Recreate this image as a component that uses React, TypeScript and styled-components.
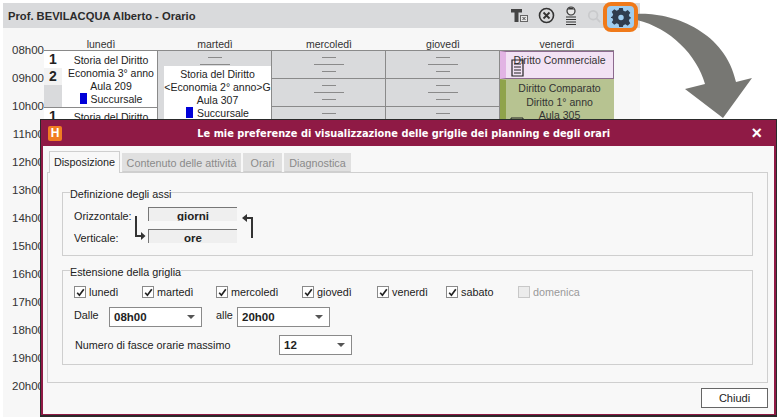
import React from "react";
import styled, { createGlobalStyle } from "styled-components";

const Global = createGlobalStyle`
  html, body { margin: 0; padding: 0; background: #fff; }
  body { font-family: "Liberation Sans", Arial, sans-serif; font-size: 11px; color: #222; }
`;

const Page = styled.div`
  position: relative;
  width: 780px;
  height: 417px;
  overflow: hidden;
  background: #fff;
  padding: 3px 0 0 3px;
  box-sizing: border-box;
`;

const Panel = styled.section`
  width: 637px;
  height: 414px;
  background: #f7f7f7;
  overflow: hidden;
`;

const TitleBar = styled.header`
  height: 25px;
  background: #d9dadc;
  display: flex;
  align-items: center;
  padding: 0 5px;
  font: bold 11.2px "Liberation Sans", sans-serif;
  color: #2b2b2b;
`;

const TitleText = styled.div`
  flex: 1;
`;

const Tools = styled.div`
  display: flex;
  align-items: center;
  gap: 10px;
  margin-right: 34px;
`;

const GridArea = styled.div`
  display: grid;
  grid-template-columns: 41px repeat(5, 114px);
  padding-top: 6px;
`;

const Hours = styled.div`
  display: flex;
  flex-direction: column;
  padding-top: 8px;
  align-items: flex-end;
`;

const Hour = styled.div`
  height: 28px;
  line-height: 16px;
  color: #333;
  font-size: 11.5px;
`;

const Day = styled.div`
  display: flex;
  flex-direction: column;
  min-width: 0;
`;

const DayName = styled.div`
  height: 17px;
  padding-top: 3px;
  line-height: 14px;
  text-align: center;
  border-bottom: 1px solid #8a8a8a;
  box-sizing: border-box;
  font-size: 10.5px;
  color: #333;
`;

const Course = styled.div<{ $h: number }>`
  height: ${(p) => p.$h}px;
  flex: none;
  display: flex;
  border-right: 1px solid #8a8a8a;
  border-bottom: 1px solid #8a8a8a;
  box-sizing: border-box;
  background: #fff;
`;

const Strip = styled.div`
  width: 18px;
  background: #d9dadc;
  flex: none;
  display: flex;
  flex-direction: column;
`;

const Num = styled.div<{ $alt?: boolean }>`
  height: 17px;
  background: ${(p) => (p.$alt ? "#f2f2f2" : "#fff")};
  font: bold 14px/17px "Liberation Sans", sans-serif;
  color: #222;
  text-align: center;
`;

const CourseText = styled.div`
  flex: 1;
  min-width: 0;
  box-sizing: border-box;
  text-align: center;
  line-height: 13px;
  font-size: 10.5px;
  padding: 3px 0 0 3px;
  white-space: nowrap;
  overflow: hidden;
`;

const Blue = styled.span`
  display: inline-block;
  width: 7px;
  height: 11px;
  background: #0000d8;
  margin-right: 4px;
  vertical-align: -1px;
`;

const Empty = styled.div<{ $h: number }>`
  height: ${(p) => p.$h}px;
  background: #d9dadc;
  border-right: 1px solid #8a8a8a;
  border-bottom: 1px solid #8a8a8a;
  box-sizing: border-box;
  display: flex;
  flex-direction: column;
  align-items: center;
  padding-top: 6px;
  gap: 6px;
  flex: none;
  overflow: hidden;
`;

const TopEmpty = styled(Empty)`
  border-bottom: none;
`;

const Dash = styled.div<{ $w: number }>`
  width: ${(p) => p.$w}px;
  height: 1px;
  background: #8a8a8a;
  flex: none;
`;

const MartediSlot = styled.div`
  display: flex;
  height: 68px;
  flex: none;
  background: #d9dadc;
  border-right: 1px solid #8a8a8a;
  box-sizing: border-box;
`;

const MartediBody = styled.div`
  flex: 1;
  min-width: 0;
  margin-left: 6px;
  background: #fff;
  text-align: center;
  line-height: 13px;
  font-size: 10.5px;
  padding-top: 2px;
  white-space: nowrap;
`;

const Tinted = styled.div<{ $bg: string; $strip: string; $border: string; $h: number }>`
  position: relative;
  height: ${(p) => p.$h}px;
  flex: none;
  box-sizing: border-box;
  background: ${(p) => p.$bg};
  border: 1px solid ${(p) => p.$border};
  border-left: 6px solid ${(p) => p.$strip};
  text-align: center;
  line-height: 13.5px;
  font-size: 10.5px;
  padding-top: 2px;
  color: #333;
`;

const DocIcon = styled.svg`
  position: absolute;
  left: 5px;
  top: 7px;
`;

const GreenIcon = styled.svg`
  position: absolute;
  left: 4px;
  top: 37px;
`;

const Arrow = styled.svg`
  position: absolute;
  left: 620px;
  top: 0;
`;

const Highlight = styled.div`
  position: absolute;
  left: 603px;
  top: 2px;
  width: 35px;
  height: 30px;
  border: 4px solid #f07a1a;
  border-radius: 8px;
  box-sizing: border-box;
  display: flex;
  align-items: center;
  justify-content: center;
  background: #9fcdf0;
`;

const Dialog = styled.div`
  position: absolute;
  left: 40px;
  top: 119px;
  width: 737px;
  height: 298px;
  box-sizing: border-box;
  background: #f8f8f8;
  border: 1px solid #2a2a2a;
  border-bottom: 2px solid #2a2a2a;
  display: flex;
  flex-direction: column;
`;

const DialogHead = styled.div`
  height: 26px;
  flex: none;
  background: #8f1a45;
  color: #fff;
  display: flex;
  align-items: center;
  padding: 0 14px 0 7px;
`;

const Logo = styled.div`
  width: 14px;
  height: 15px;
  border-radius: 2px;
  background: #f07c22;
  color: #fff;
  font: bold 12px/15px "Liberation Sans", sans-serif;
  text-align: center;
`;

const DialogTitle = styled.div`
  flex: 1;
  text-align: center;
  font: bold 9.8px "DejaVu Sans", sans-serif;
  padding-right: 6px;
`;

const Close = styled.div`
  font: bold 18px/14px "Liberation Sans", sans-serif;
`;

const DialogBody = styled.div`
  flex: 1;
  min-height: 0;
  border-left: 2px solid #8f1a45;
  border-right: 2px solid #8f1a45;
  border-bottom: 1px solid #8f1a45;
  padding: 5px 6px 0 4px;
  display: flex;
  flex-direction: column;
`;

const Tabs = styled.div`
  display: flex;
  gap: 2px;
  height: 21px;
  padding-left: 2px;
  flex: none;
  position: relative;
  z-index: 1;
`;

const Tab = styled.div<{ $active?: boolean; $w: number }>`
  width: ${(p) => p.$w}px;
  box-sizing: border-box;
  height: ${(p) => (p.$active ? 22 : 19)}px;
  margin-top: ${(p) => (p.$active ? 0 : 2)}px;
  text-align: center;
  line-height: ${(p) => (p.$active ? 21 : 18)}px;
  font-size: 10.8px;
  background: ${(p) => (p.$active ? "#f8f8f8" : "#e0e0e0")};
  color: ${(p) => (p.$active ? "#222" : "#8a8a8a")};
  border: 1px solid ${(p) => (p.$active ? "#cfcfcf" : "#e0e0e0")};
  border-bottom: ${(p) => (p.$active ? "none" : "1px solid #cfcfcf")};
`;

const TabPanel = styled.div`
  height: 211px;
  flex: none;
  box-sizing: border-box;
  border: 1px solid #cfcfcf;
  padding: 12px 14px 0;
  display: flex;
  flex-direction: column;
  gap: 7px;
`;

const Group = styled.fieldset<{ $h: number }>`
  margin: 0;
  padding: 0 7px;
  height: ${(p) => p.$h}px;
  box-sizing: border-box;
  border: 1px solid #cfcfcf;
  flex: none;
`;

const Legend = styled.legend`
  padding: 0;
  font-size: 10.8px;
  line-height: 14px;
  color: #222;
  position: relative;
  top: 2px;
`;

const Axes = styled.div`
  display: grid;
  grid-template-columns: 60px 14px 89px 20px;
  grid-template-rows: 22px 22px;
  padding: 4px 0 0 4px;
  align-items: center;
`;

const AxisLabel = styled.div`
  font-size: 10.8px;
  padding-top: 3px;
  white-space: nowrap;
  color: #222;
`;

const AxisValue = styled.div`
  height: 14px;
  box-sizing: border-box;
  border-top: 1px solid #777;
  border-left: 1px solid #777;
  background: #efefef;
  font: bold 11.5px/16px "Liberation Sans", sans-serif;
  text-align: center;
  color: #222;
  overflow: hidden;
`;

const AxisArrow = styled.svg<{ $col: number }>`
  grid-row: 1 / 3;
  grid-column: ${(p) => p.$col};
`;

const DayChecks = styled.div`
  display: flex;
  padding: 7px 0 0 4px;
  height: 16px;
  align-items: center;
`;

const Check = styled.label<{ $w: number; $off?: boolean }>`
  width: ${(p) => p.$w}px;
  flex: none;
  display: flex;
  align-items: center;
  gap: 3px;
  font-size: 10.8px;
  color: ${(p) => (p.$off ? "#9a9a9a" : "#222")};
`;

const Box = styled.span<{ $off?: boolean }>`
  width: 10px;
  height: 10px;
  flex: none;
  border: 1px solid ${(p) => (p.$off ? "#c8c8c8" : "#8a8a8a")};
  background: ${(p) => (p.$off ? "#ececec" : "#fff")};
  display: flex;
  align-items: center;
  justify-content: center;
`;

const Row = styled.div<{ $top: number }>`
  display: flex;
  align-items: center;
  padding: ${(p) => p.$top}px 0 0 4px;
  height: 20px;
`;

const RowLabel = styled.div<{ $w: number; $indent?: number; $lift?: number }>`
  width: ${(p) => p.$w}px;
  box-sizing: border-box;
  padding-left: ${(p) => p.$indent ?? 0}px;
  font-size: 10.8px;
  color: #222;
  position: relative;
  top: ${(p) => -(p.$lift ?? 0)}px;
  flex: none;
`;

const Select = styled.div<{ $w: number }>`
  width: ${(p) => p.$w}px;
  height: 20px;
  box-sizing: border-box;
  background: #fff;
  border: 1px solid #8a8a8a;
  display: flex;
  align-items: center;
  justify-content: space-between;
  padding: 0 6px 0 4px;
  font: bold 11.5px "Liberation Sans", sans-serif;
  color: #222;
  flex: none;
`;

const Caret = styled.span`
  width: 0;
  height: 0;
  border-left: 4px solid transparent;
  border-right: 4px solid transparent;
  border-top: 4px solid #555;
`;

const Footer = styled.div`
  display: flex;
  justify-content: flex-end;
  padding-top: 5px;
`;

const Button = styled.button`
  width: 67px;
  height: 20px;
  box-sizing: border-box;
  border: 1px solid #666;
  background: #fff;
  font: 11px "Liberation Sans", sans-serif;
  color: #222;
  padding: 0;
`;

const HOURS = ["08h00","09h00","10h00","11h00","12h00","13h00","14h00","15h00","16h00","17h00","18h00","19h00","20h00"];

const Dashes = () => (
  <>
    <Dash $w={14} />
    <Dash $w={30} />
    <Dash $w={14} />
  </>
);

const Tick = () => (
  <svg width="9" height="9" viewBox="0 0 9 9">
    <path d="M1.2 4.8 L3.4 7.2 L7.8 1.2" fill="none" stroke="#222" strokeWidth="1.7" />
  </svg>
);

const DayCheck = ({ w, label, off }: { w: number; label: string; off?: boolean }) => (
  <Check $w={w} $off={off}>
    <Box $off={off}>{off ? null : <Tick />}</Box>
    {label}
  </Check>
);

export default function App() {
  return (
    <Page>
      <Global />
      <Panel>
        <TitleBar>
          <TitleText>Prof. BEVILACQUA Alberto - Orario</TitleText>
          <Tools>
            <svg width="17" height="13" viewBox="0 0 17 13">
              <path d="M0 0h11v3.5H7.5V13h-4V3.5H0z" fill="#444" />
              <rect x="9.5" y="6.5" width="7" height="6" fill="#e8e8e8" stroke="#666" />
              <path d="M11.500 8l3 3M14.500 8l-3 3" stroke="#444" />
            </svg>
            <svg width="17" height="17" viewBox="0 0 17 17">
              <circle cx="8.5" cy="8.5" r="7" fill="none" stroke="#333" strokeWidth="1.6" />
              <path d="M5.5 5.5l6 6M11.5 5.5l-6 6" stroke="#333" strokeWidth="1.8" />
            </svg>
            <svg width="12" height="20" viewBox="0 0 12 20">
              <circle cx="6" cy="5" r="4" fill="#e8e8e8" stroke="#333" strokeWidth="1.2" />
              <path d="M2.5 3.5C4 1 8 1 9.5 3.5z" fill="#333" />
              <path d="M1 11h10M1 13.5h10M1 16h10M1 18.5h10" stroke="#333" strokeWidth="1.2" />
            </svg>
            <svg width="14" height="14" viewBox="0 0 16 16">
              <circle cx="7" cy="7" r="5" fill="none" stroke="#c9cacc" strokeWidth="2" />
              <path d="M10.5 10.5l4.5 4.5" stroke="#c9cacc" strokeWidth="2" />
            </svg>
          </Tools>
        </TitleBar>
        <GridArea>
          <Hours>
            {HOURS.map((h) => (
              <Hour key={h}>{h}</Hour>
            ))}
          </Hours>
          <Day>
            <DayName>lunedì</DayName>
            <Course $h={57}>
              <Strip>
                <Num>1</Num>
                <Num $alt>2</Num>
              </Strip>
              <CourseText>
                Storia del Diritto
                <br />
                Economia 3° anno
                <br />
                Aula 209
                <br />
                <Blue />
                Succursale
              </CourseText>
            </Course>
            <Course $h={40}>
              <Strip>
                <Num>1</Num>
              </Strip>
              <CourseText>Storia del Diritto</CourseText>
            </Course>
          </Day>
          <Day>
            <DayName>martedì</DayName>
            <TopEmpty $h={15}>
              <Dash $w={14} />
              <Dash $w={30} />
            </TopEmpty>
            <MartediSlot>
              <MartediBody>
                Storia del Diritto
                <br />
                &lt;Economia 2° anno&gt;G
                <br />
                Aula 307
                <br />
                <Blue />
                Succursale
              </MartediBody>
            </MartediSlot>
          </Day>
          {["mercoledì", "giovedì"].map((d) => (
            <Day key={d}>
              <DayName>{d}</DayName>
              <Empty $h={28}>
                <Dashes />
              </Empty>
              <Empty $h={28}>
                <Dashes />
              </Empty>
              <Empty $h={28}>
                <Dashes />
              </Empty>
            </Day>
          ))}
          <Day>
            <DayName>venerdì</DayName>
            <Tinted $h={28} $bg="#f2e2f4" $strip="#e2b4e4" $border="#8c6a8e">
              Diritto Commerciale
              <DocIcon width="13" height="18" viewBox="0 0 13 18">
                <path d="M1 1h11v16H1z" fill="none" stroke="#222" strokeWidth="1.2" />
                <path d="M3 5h7M3 8h7M3 11h7M3 14h7" stroke="#222" />
              </DocIcon>
            </Tinted>
            <Tinted $h={60} $bg="#b7c391" $strip="#8fa34a" $border="#b7c391">
              Diritto Comparato
              <br />
              Diritto 1° anno
              <br />
              Aula 305
              <GreenIcon width="14" height="10" viewBox="0 0 14 10">
                <path d="M1 1h12v9H1z" fill="none" stroke="#222" />
                <path d="M1 3h12" stroke="#222" />
              </GreenIcon>
            </Tinted>
          </Day>
        </GridArea>
      </Panel>

      <Arrow width="160" height="125" viewBox="620 0 160 125">
        <path
          d="M637 14 C670 12 725 30 736 82 L752 78 L723 118 L685 89 L705 84 C697 55 670 28 637 20 Z"
          fill="#777773"
        />
      </Arrow>

      <Highlight>
        <svg width="20" height="20" viewBox="0 0 22 22">
          <path
            d="M9 1h4l.6 3 2.2 1 2.6-1.6 2.8 2.8-1.600 2.600 1 2.200 1.400.5v1l-1.400.5-1 2.200 1.600 2.600-2.800 2.800-2.600-1.600-2.200 1L13 22H9l-.6-3-2.200-1-2.600 1.600-2.800-2.800 1.600-2.600-1-2.200L0 12v-1l1.400-.5 1-2.200L.8 5.200l2.800-2.800 2.600 1.600 2.200-1z"
            fill="#2f3d4f"
          />
          <circle cx="11" cy="11.500" r="3" fill="#9fcdf0" />
        </svg>
      </Highlight>

      <Dialog>
        <DialogHead>
          <Logo>H</Logo>
          <DialogTitle>Le mie preferenze di visualizzazione delle griglie dei planning e degli orari</DialogTitle>
          <Close>×</Close>
        </DialogHead>
        <DialogBody>
          <Tabs>
            <Tab $active $w={71}>Disposizione</Tab>
            <Tab $w={119}>Contenuto delle attività</Tab>
            <Tab $w={39}>Orari</Tab>
            <Tab $w={67}>Diagnostica</Tab>
          </Tabs>
          <TabPanel>
            <Group $h={71}>
              <Legend>Definizione degli assi</Legend>
              <Axes>
                <AxisLabel>Orizzontale:</AxisLabel>
                <AxisArrow $col={2} width="12" height="30" viewBox="0 0 12 30">
                  <path d="M2 6V26H7" fill="none" stroke="#333" strokeWidth="2" />
                  <path d="M7 22l4.500 4-4.500 4z" fill="#333" />
                </AxisArrow>
                <AxisValue>giorni</AxisValue>
                <AxisArrow $col={4} width="20" height="30" viewBox="0 0 20 30">
                  <path d="M15 28V8H9" fill="none" stroke="#333" strokeWidth="2" />
                  <path d="M10 4L5 8l5 4z" fill="#333" />
                </AxisArrow>
                <AxisLabel>Verticale:</AxisLabel>
                <AxisValue>ore</AxisValue>
              </Axes>
            </Group>
            <Group $h={102}>
              <Legend>Estensione della griglia</Legend>
              <DayChecks>
                <DayCheck w={68} label="lunedì" />
                <DayCheck w={74} label="martedì" />
                <DayCheck w={86} label="mercoledì" />
                <DayCheck w={75} label="giovedì" />
                <DayCheck w={69} label="venerdì" />
                <DayCheck w={72} label="sabato" />
                <DayCheck w={80} label="domenica" off />
              </DayChecks>
              <Row $top={7}>
                <RowLabel $w={35} $lift={2}>Dalle</RowLabel>
                <Select $w={93}>08h00<Caret /></Select>
                <RowLabel $w={35} $indent={14} $lift={2}>alle</RowLabel>
                <Select $w={93}>20h00<Caret /></Select>
              </Row>
              <Row $top={8}>
                <RowLabel $w={205} $indent={1}>Numero di fasce orarie massimo</RowLabel>
                <Select $w={73}>12<Caret /></Select>
              </Row>
            </Group>
          </TabPanel>
          <Footer>
            <Button>Chiudi</Button>
          </Footer>
        </DialogBody>
      </Dialog>
    </Page>
  );
}
